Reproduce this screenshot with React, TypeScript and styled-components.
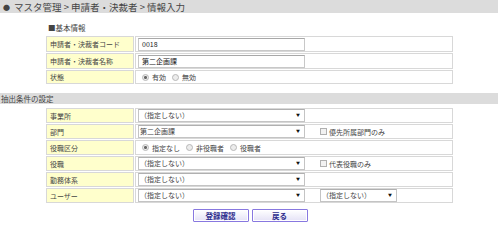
import styled, { createGlobalStyle } from "styled-components";

const GlobalStyle = createGlobalStyle`
  html, body {
    margin: 0;
    padding: 0;
    background: #ffffff;
  }
  body {
    font-family: "Noto Sans CJK JP", "Noto Sans", sans-serif;
    color: #333333;
  }
`;

const App = () => {
  return (
    <Page>
      <GlobalStyle />
      <TitleBar>
        <Dot>●</Dot>
        マスタ管理 &gt; 申請者・決裁者 &gt; 情報入力
      </TitleBar>

      <Caption>■基本情報</Caption>
      <FormTable>
        <colgroup>
          <col style={{ width: 88 }} />
          <col />
        </colgroup>
        <tbody>
          <Row>
            <LabelCell $h={16}>申請者・決裁者コード</LabelCell>
            <ValueCell $h={16}>
              <TextInput>0018</TextInput>
            </ValueCell>
          </Row>
          <Row>
            <LabelCell $h={16}>申請者・決裁者名称</LabelCell>
            <ValueCell $h={16}>
              <TextInput>第二企画課</TextInput>
            </ValueCell>
          </Row>
          <Row>
            <LabelCell $h={14}>状態</LabelCell>
            <ValueCell $h={14}>
              <Options>
                <Radio $checked />
                <OptionText>有効</OptionText>
                <Radio />
                <OptionText>無効</OptionText>
              </Options>
            </ValueCell>
          </Row>
        </tbody>
      </FormTable>

      <SectionBar>抽出条件の設定</SectionBar>
      <FormTable>
        <colgroup>
          <col style={{ width: 88 }} />
          <col />
        </colgroup>
        <tbody>
          <Row>
            <LabelCell $h={15}>事業所</LabelCell>
            <ValueCell $h={15}>
              <Line>
                <Select>（指定しない）</Select>
              </Line>
            </ValueCell>
          </Row>
          <Row>
            <LabelCell $h={15}>部門</LabelCell>
            <ValueCell $h={15}>
              <Line>
                <Select>第二企画課</Select>
                <Check>
                  <Box />
                  優先所属部門のみ
                </Check>
              </Line>
            </ValueCell>
          </Row>
          <Row>
            <LabelCell $h={15}>役職区分</LabelCell>
            <ValueCell $h={15}>
              <Options>
                <Radio $checked />
                <OptionText>指定なし</OptionText>
                <Radio />
                <OptionText>非役職者</OptionText>
                <Radio />
                <OptionText>役職者</OptionText>
              </Options>
            </ValueCell>
          </Row>
          <Row>
            <LabelCell $h={15}>役職</LabelCell>
            <ValueCell $h={15}>
              <Line>
                <Select>（指定しない）</Select>
                <Check>
                  <Box />
                  代表役職のみ
                </Check>
              </Line>
            </ValueCell>
          </Row>
          <Row>
            <LabelCell $h={15}>勤務体系</LabelCell>
            <ValueCell $h={15}>
              <Line>
                <Select>（指定しない）</Select>
              </Line>
            </ValueCell>
          </Row>
          <Row>
            <LabelCell $h={15}>ユーザー</LabelCell>
            <ValueCell $h={15}>
              <Line>
                <Select>（指定しない）</Select>
                <Select $w={77}>（指定しない）</Select>
              </Line>
            </ValueCell>
          </Row>
        </tbody>
      </FormTable>

      <Buttons>
        <Button>登録確認</Button>
        <Button>戻る</Button>
      </Buttons>
    </Page>
  );
};

const Page = styled.div`
  width: 500px;
  height: 227px;
  display: flex;
  flex-direction: column;
  overflow: hidden;
`;

const TitleBar = styled.div`
  height: 13px;
  margin-right: 2px;
  padding-left: 3px;
  display: flex;
  align-items: center;
  background: #dcdcdc;
  font-size: 9.5px;
  color: #444444;
  white-space: pre;
`;

const Dot = styled.span`
  font-size: 7px;
  margin-right: 4px;
`;

const Caption = styled.div`
  margin: 10px 0 0 48px;
  height: 12px;
  font-size: 7.5px;
  line-height: 10px;
  color: #444;
`;

const FormTable = styled.table`
  margin-left: 45px;
  width: 409px;
  table-layout: fixed;
  border-collapse: separate;
  border-spacing: 1px;
  font-size: 7px;
`;

const Row = styled.tr``;

const LabelCell = styled.td<{ $h: number }>`
  height: ${(p) => p.$h - 2}px;
  padding: 0 0 0 3px;
  background: #ffffcc;
  border: 1px solid #d8d8d8;
  vertical-align: middle;
  white-space: nowrap;
  color: #444;
`;

const ValueCell = styled.td<{ $h: number }>`
  height: ${(p) => p.$h - 2}px;
  padding: 0 0 0 2px;
  background: #ffffff;
  border: 1px solid #d8d8d8;
  vertical-align: middle;
  white-space: nowrap;
`;

const TextInput = styled.div`
  width: 162px;
  height: 11px;
  padding-left: 3px;
  border: 1px solid #c8c8c8;
  border-top-color: #a8a8a8;
  font-size: 7px;
  line-height: 11px;
  color: #222;
`;

const Line = styled.div`
  display: flex;
  align-items: center;
  gap: 15px;
`;

const Select = styled.div<{ $w?: number }>`
  position: relative;
  width: ${(p) => (p.$w ?? 167) - 2}px;
  height: 11px;
  border: 1px solid #c4c4c4;
  border-top-color: #b0b0b0;
  font-size: 7px;
  line-height: 11px;
  color: #444;
  text-indent: 1px;
  &::after {
    content: "▼";
    position: absolute;
    right: 4px;
    top: 0;
    font-size: 4px;
    line-height: 11px;
    color: #111;
  }
`;

const Check = styled.div`
  display: flex;
  align-items: center;
  gap: 2px;
  font-size: 7px;
  color: #444;
`;

const Box = styled.span`
  width: 5px;
  height: 5px;
  border: 1px solid #b0b0b0;
  background: #f2f2f2;
`;

const Options = styled.div`
  display: flex;
  align-items: center;
  padding-left: 4px;
`;

const Radio = styled.span<{ $checked?: boolean }>`
  width: 5px;
  height: 5px;
  border-radius: 50%;
  border: 1px solid #b8b8b8;
  background: ${(p) =>
    p.$checked
      ? "radial-gradient(circle, #666 0 1.3px, #ececec 1.6px)"
      : "#ececec"};
`;

const OptionText = styled.span`
  margin: 0 6px 0 3px;
  font-size: 7px;
  color: #444;
`;

const SectionBar = styled.div`
  margin: 8px 2px 3px 0;
  height: 11px;
  padding-left: 1px;
  background: #dcdcdc;
  font-size: 7.5px;
  line-height: 11px;
  color: #444;
`;

const Buttons = styled.div`
  display: flex;
  justify-content: center;
  gap: 3px;
  margin-top: 5px;
`;

const Button = styled.button`
  width: 56px;
  height: 13px;
  padding: 0;
  border: 1px solid #8878e0;
  border-radius: 1px;
  background: linear-gradient(#ffffff, #e4e2f6);
  box-shadow: inset 0 0 0 1px #ffffff;
  font-family: "Noto Sans CJK JP", sans-serif;
  font-size: 7.5px;
  font-weight: bold;
  color: #2c2c8c;
  line-height: 11px;
  cursor: pointer;
`;

export default App;
